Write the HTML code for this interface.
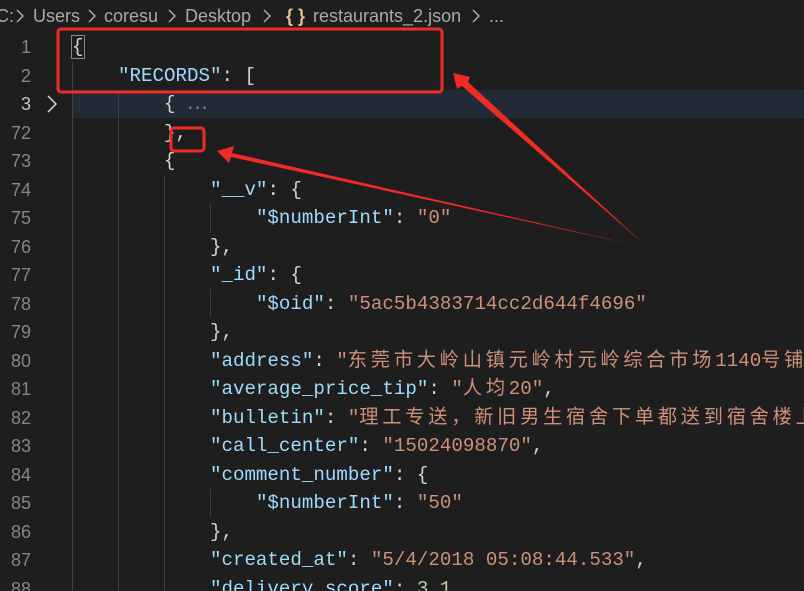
<!DOCTYPE html>
<html style="overflow:hidden"><head><meta charset="utf-8"><style>
body{margin:0;width:804px;height:591px;background:#1e1e1e;overflow:hidden;position:relative;font-family:"Liberation Mono","Noto Sans CJK SC",monospace;}
.bc{position:absolute;top:3px;height:26px;font:18px "Liberation Sans",sans-serif;color:#a9a9a9;white-space:pre;line-height:26px}
.hl{position:absolute;left:72px;right:0;top:90px;height:28px;background:#222a35}
.ln{position:absolute;left:0;width:31px;text-align:right;color:#858585;font-size:18px;line-height:28.5px;font-family:"Liberation Sans",sans-serif}
.code{position:absolute;left:72px;white-space:pre;font-size:19.17px;line-height:28.5px;color:#d4d4d4}
.k{color:#9cdcfe}.s{color:#ce9178}.n{color:#b5cea8}.g{color:#808080}
.c{letter-spacing:3.8px}
.guide{position:absolute;width:1px;background:#404040}
</style></head><body>
<div class="bc" style="left:-4px">C:</div>
<div class="bc" style="left:33px">Users</div>
<div class="bc" style="left:104px">coresu</div>
<div class="bc" style="left:185px">Desktop</div>
<div class="bc" style="left:286px;color:#e2c08d;font-weight:bold">{ }</div>
<div class="bc" style="left:313px">restaurants_2.json</div>
<div class="bc" style="left:489px">...</div>
<svg style="position:absolute;left:0;top:0" width="804" height="30">
<g fill="none" stroke="#a9a9a9" stroke-width="1.5">
<path d="M17 10 L23 16 L17 22"/><path d="M89 10 L95 16 L89 22"/><path d="M169 10 L175 16 L169 22"/><path d="M264 10 L270 16 L264 22"/><path d="M473 10 L479 16 L473 22"/>
</g></svg>
<div class="hl"></div>
<div class="guide" style="left:72px;top:61px;height:530px"></div>
<div class="guide" style="left:118px;top:90px;height:501px"></div>
<div class="guide" style="left:164px;top:175px;height:416px"></div>
<div class="guide" style="left:210px;top:204px;height:28px"></div>
<div class="guide" style="left:210px;top:289px;height:28px"></div>
<div class="guide" style="left:210px;top:489px;height:28px"></div>
<div class="ln" style="top:33px">1<br>2<br><span style="color:#c6c6c6">3</span><br>72<br>73<br>74<br>75<br>76<br>77<br>78<br>79<br>80<br>81<br>82<br>83<br>84<br>85<br>86<br>87<br>88</div>
<svg style="position:absolute;left:44px;top:94px" width="16" height="20"><path d="M4 2 L12 10 L4 18" fill="none" stroke="#c5c5c5" stroke-width="1.6"/></svg>
<div style="position:absolute;left:0;top:0;width:804px;height:591px;overflow:hidden">
<div class="code" style="top:33px"><span style="outline:1px solid #888">{</span>
    <span class="k">"RECORDS"</span>: [
        { <span class="g">⋯</span>
        },
        {
            <span class="k">"__v"</span>: {
                <span class="k">"$numberInt"</span>: <span class="s">"0"</span>
            },
            <span class="k">"_id"</span>: {
                <span class="k">"$oid"</span>: <span class="s">"5ac5b4383714cc2d644f4696"</span>
            },
            <span class="k">"address"</span>: <span class="s">"<span class="c">东莞市大岭山镇元岭村元岭综合市场</span>1140<span class="c">号铺位</span>"</span>
            <span class="k">"average_price_tip"</span>: <span class="s">"<span class="c">人均</span>20"</span>,
            <span class="k">"bulletin"</span>: <span class="s">"<span class="c">理工专送，新旧男生宿舍下单都送到宿舍楼上。</span>"</span>
            <span class="k">"call_center"</span>: <span class="s">"15024098870"</span>,
            <span class="k">"comment_number"</span>: {
                <span class="k">"$numberInt"</span>: <span class="s">"50"</span>
            },
            <span class="k">"created_at"</span>: <span class="s">"5/4/2018 05:08:44.533"</span>,
            <span class="k">"delivery_score"</span>: <span class="n">3.1</span></div>
</div>
<svg style="position:absolute;left:0;top:0" width="804" height="591">
<rect x="58" y="29" width="384" height="63" rx="3" fill="none" stroke="#f02a24" stroke-width="3"/>
<rect x="171" y="128" width="33" height="23" rx="3" fill="none" stroke="#f02a24" stroke-width="3"/>
<polygon points="645,245 468,82 470,77 453,73 457,89 462,86" fill="#f02a24"/>
<polygon points="630,244 232,153 234,146 217,151 229,163 231,157" fill="#f02a24"/>
</svg>
</body></html>
